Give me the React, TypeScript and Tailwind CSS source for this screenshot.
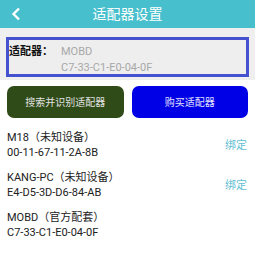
const devices = [
  { name: 'M18（未知设备）', mac: '00-11-67-11-2A-8B', bind: true },
  { name: 'KANG-PC（未知设备）', mac: 'E4-D5-3D-D6-84-AB', bind: true },
  { name: 'MOBD（官方配套）', mac: 'C7-33-C1-E0-04-0F', bind: false },
];

const App = () => {
  return (
    <div
      className="w-[255px] h-[255px] bg-white overflow-hidden"
      style={{ fontFamily: 'Roboto, "Noto Sans CJK SC", sans-serif' }}
    >
      <div className="relative flex items-center justify-center h-[28px] bg-[#47bfcc]">
        <svg
          className="absolute left-[11px] top-[7px]"
          width="10"
          height="14"
          viewBox="0 0 10 14"
          fill="none"
        >
          <path d="M8 1.5 L2.5 7 L8 12.5" stroke="white" strokeWidth="2.4" />
        </svg>
        <div className="text-[14px] leading-none text-white">适配器设置</div>
      </div>
      <div className="bg-[#efefef] px-[6px] pt-[9px] pb-[3px]">
        <div className="flex h-[40px] border-[3px] border-[#4452cf] bg-[#eeeeee] pt-[4px]">
          <div className="w-[52px] text-[11px] leading-[16px] font-bold text-[#111]">适配器：</div>
          <div className="text-[11px] leading-[16px] text-[#a8a8a8]">
            <div>MOBD</div>
            <div>C7-33-C1-E0-04-0F</div>
          </div>
        </div>
      </div>
      <div className="flex gap-[8px] px-[7px] pt-[6px]">
        <div className="flex h-[32px] flex-1 items-center justify-center rounded-[7px] bg-[#2f4b17] text-[10px] text-[#e2e2e2]">
          搜索并识别适配器
        </div>
        <div className="flex h-[32px] flex-1 items-center justify-center rounded-[7px] bg-[#0000e6] text-[10px] text-[#e2e2ff]">
          购买适配器
        </div>
      </div>
      <div className="px-[7px] pt-[12px]">
        {devices.map((d) => (
          <div key={d.mac} className="flex h-[40px] items-start">
            <div className="flex-1 text-[11px] leading-[15px] text-[#222]">
              <div>{d.name}</div>
              <div>{d.mac}</div>
            </div>
            {d.bind && (
              <div className="mt-[8px] mr-[1px] text-[11px] leading-[15px] text-[#62c0d2]">绑定</div>
            )}
          </div>
        ))}
      </div>
    </div>
  );
};

export default App;
